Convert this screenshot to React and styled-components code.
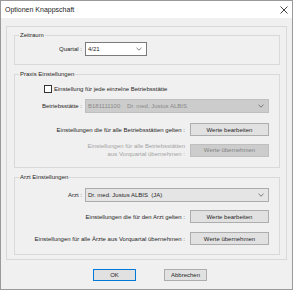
import React from 'react';
import styled, { createGlobalStyle } from 'styled-components';

const Global = createGlobalStyle`
  html, body { margin: 0; padding: 0; background: #ffffff; }
  body { font-family: "Liberation Sans", Arial, sans-serif; }
  * { box-sizing: border-box; }
`;

const Window = styled.div`
  width: 293px;
  height: 290px;
  border: 1px solid #9a9a9a;
  background: #f0f0f0;
  display: flex;
  flex-direction: column;
  font-family: "Liberation Sans", Arial, sans-serif;
  font-size: 6px;
  line-height: 8px;
  color: #262626;
`;

const TitleBar = styled.div`
  height: 17px;
  background: #ffffff;
  display: flex;
  align-items: center;
  justify-content: space-between;
  padding: 0 4px 0 4px;
  font-size: 7px;
  flex: none;
`;

const Body = styled.div`
  flex: 1;
  display: flex;
  flex-direction: column;
  padding: 8px 5px 0 5px;
`;

const Panel = styled.div`
  border: 1px solid #d9d9d9;
  padding: 4px 6px 4px 7px;
  display: flex;
  flex-direction: column;
  gap: 5px;
`;

const Group = styled.fieldset`
  margin: 0;
  border: 1px solid #d9d9d9;
  padding: ${p => p.$pt}px 10px ${p => p.$pb}px 0;
  min-width: 0;
  display: flex;
  flex-direction: column;
`;

const Legend = styled.legend`
  margin-left: 4px;
  padding: 0 1px;
  font-size: 6px;
  line-height: 8px;
`;

const FieldRow = styled.div`
  display: grid;
  grid-template-columns: 67px 1fr;
  column-gap: 3px;
  align-items: center;
  margin-top: ${p => p.$mt || 0}px;
`;

const Label = styled.span`
  text-align: right;
  white-space: nowrap;
  color: ${p => (p.$disabled ? '#a3a3a3' : 'inherit')};
`;

const ComboBox = styled.div`
  height: 14px;
  width: ${p => (p.$w ? `${p.$w}px` : '100%')};
  display: flex;
  align-items: center;
  justify-content: space-between;
  padding: 0 4px 0 2px;
  white-space: pre;
  border: 1px solid ${p => (p.$variant === 'edit' ? '#7a7a7a' : p.$variant === 'disabled' ? '#bfbfbf' : '#acacac')};
  background: ${p => (p.$variant === 'edit' ? '#ffffff' : p.$variant === 'disabled' ? '#cccccc' : '#e5e5e5')};
  color: ${p => (p.$variant === 'disabled' ? '#8a8a8a' : 'inherit')};
`;

const CheckRow = styled.label`
  display: flex;
  align-items: center;
  gap: 2px;
  height: 10px;
  padding-left: 29px;
`;

const CheckBox = styled.span`
  width: 8px;
  height: 8px;
  border: 1px solid #333;
  background: #fff;
  flex: none;
`;

const ActionRow = styled.div`
  display: flex;
  justify-content: flex-end;
  align-items: center;
  gap: 5px;
  margin-top: ${p => p.$mt || 0}px;
`;

const Button = styled.button`
  font-family: inherit;
  font-size: 6px;
  line-height: 8px;
  width: ${p => p.$w || 79}px;
  height: ${p => p.$h || 13}px;
  padding: 0;
  margin: 0;
  border: 1px solid ${p => (p.$default ? '#0078d7' : p.disabled ? '#bfbfbf' : '#adadad')};
  background: ${p => (p.disabled ? '#cccccc' : '#e1e1e1')};
  color: ${p => (p.disabled ? '#838383' : '#262626')};
  flex: none;
`;

const Footer = styled.div`
  display: flex;
  gap: 28px;
  padding: 9px 0 0 87px;
`;

const Chevron = () => (
  <svg width="6" height="4" viewBox="0 0 6 4">
    <polyline points="0.5,0.8 3,3.2 5.5,0.8" fill="none" stroke="#606060" strokeWidth="0.8" />
  </svg>
);

const CloseIcon = () => (
  <svg width="8" height="8" viewBox="0 0 8 8">
    <line x1="0.5" y1="0.5" x2="7.5" y2="7.5" stroke="#111" strokeWidth="0.8" />
    <line x1="7.5" y1="0.5" x2="0.5" y2="7.5" stroke="#111" strokeWidth="0.8" />
  </svg>
);

export default function App() {
  return (
    <>
      <Global />
      <Window>
        <TitleBar>
          <span>Optionen Knappschaft</span>
          <CloseIcon />
        </TitleBar>
        <Body>
          <Panel>
            <Group $pt={3} $pb={8}>
              <Legend>Zeitraum</Legend>
              <FieldRow>
                <Label>Quartal :</Label>
                <ComboBox $variant="edit" $w={62}>
                  <span>4/21</span>
                  <Chevron />
                </ComboBox>
              </FieldRow>
            </Group>

            <Group $pt={6} $pb={9}>
              <Legend>Praxis Einstellungen</Legend>
              <CheckRow>
                <CheckBox />
                <span>Einstellung für jede einzelne Betriebsstätte</span>
              </CheckRow>
              <FieldRow $mt={5}>
                <Label>Betriebsstätte :</Label>
                <ComboBox $variant="disabled">
                  <span>{'B181111100    Dr. med. Justus ALBIS'}</span>
                  <Chevron />
                </ComboBox>
              </FieldRow>
              <ActionRow $mt={10}>
                <Label>Einstellungen die für alle Betriebsstätten gelten :</Label>
                <Button>Werte bearbeiten</Button>
              </ActionRow>
              <ActionRow $mt={6}>
                <Label $disabled>
                  Einstellungen für alle Betriebsstätten
                  <br />
                  aus Vorquartal übernehmen :
                </Label>
                <Button disabled>Werte übernehmen</Button>
              </ActionRow>
            </Group>

            <Group $pt={7} $pb={9}>
              <Legend>Arzt Einstellungen</Legend>
              <FieldRow>
                <Label>Arzt :</Label>
                <ComboBox $variant="list">
                  <span>{'Dr. med. Justus ALBIS  (JA)'}</span>
                  <Chevron />
                </ComboBox>
              </FieldRow>
              <ActionRow $mt={8}>
                <Label>Einstellungen die für den Arzt gelten :</Label>
                <Button>Werte bearbeiten</Button>
              </ActionRow>
              <ActionRow $mt={9}>
                <Label>Einstellungen für alle Ärzte aus Vorquartal übernehmen :</Label>
                <Button>Werte übernehmen</Button>
              </ActionRow>
            </Group>
          </Panel>
          <Footer>
            <Button $default $w={43} $h={12}>OK</Button>
            <Button $w={43} $h={12}>Abbrechen</Button>
          </Footer>
        </Body>
      </Window>
    </>
  );
}
